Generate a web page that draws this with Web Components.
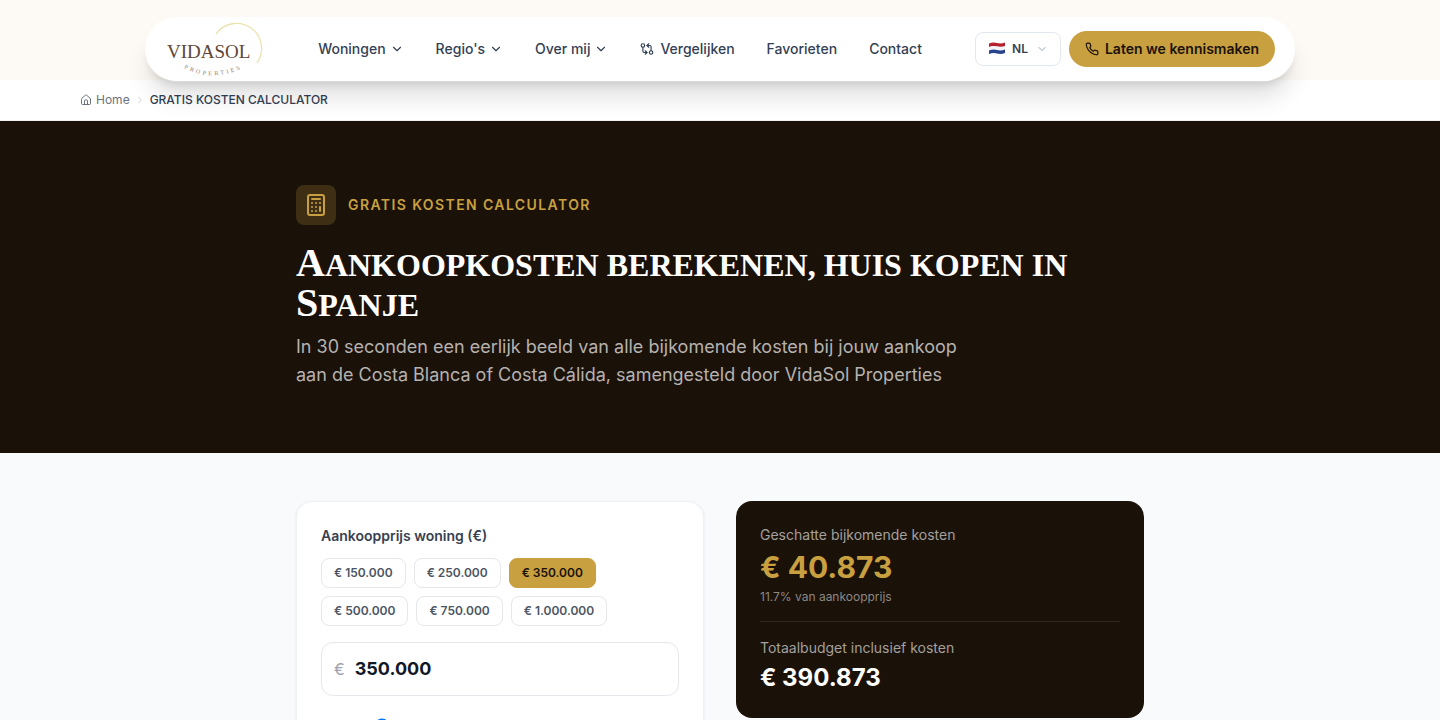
<!DOCTYPE html>
<html lang="nl">
<head>
<meta charset="utf-8">
<meta name="viewport" content="width=device-width, initial-scale=1">
<title>Gratis kosten calculator | VidaSol Properties</title>
<style>
  :root {
    --gold: #c8a03f;
    --dark: #1a1109;
    --slate-700: #334155;
    --line: #e5e7eb;
  }
  html {
    scrollbar-width: none;
  }
  body {
    margin: 0;
    background: #f8fafc;
    font-family: Inter, "Liberation Sans", sans-serif;
    -webkit-font-smoothing: antialiased;
  }
</style>
</head>
<body>
<site-header>
  <nav-item menu>Woningen</nav-item>
  <nav-item menu>Regio's</nav-item>
  <nav-item menu>Over mij</nav-item>
  <nav-item icon="compare">Vergelijken</nav-item>
  <nav-item>Favorieten</nav-item>
  <nav-item>Contact</nav-item>
</site-header>
<bread-crumb>GRATIS KOSTEN CALCULATOR</bread-crumb>
<page-hero>
  <span slot="eyebrow">GRATIS KOSTEN CALCULATOR</span>
  <span slot="intro">In 30 seconden een eerlijk beeld van alle bijkomende kosten bij jouw aankoop aan de Costa Blanca of Costa Cálida, samengesteld door VidaSol Properties</span>
</page-hero>
<cost-calculator></cost-calculator>

<script>
const ICONS = {
  chevron: '<path d="m6 9 6 6 6-6"/>',
  right: '<path d="m9 18 6-6-6-6"/>',
  compare: '<circle cx="5" cy="6" r="3"/><path d="M12 6h5a2 2 0 0 1 2 2v7"/><path d="m15 9-3-3 3-3"/><circle cx="19" cy="18" r="3"/><path d="M12 18H7a2 2 0 0 1-2-2V9"/><path d="m9 15 3 3-3 3"/>',
  phone: '<path d="M22 16.92v3a2 2 0 0 1-2.18 2 19.79 19.79 0 0 1-8.63-3.07 19.5 19.5 0 0 1-6-6 19.79 19.79 0 0 1-3.07-8.67A2 2 0 0 1 4.11 2h3a2 2 0 0 1 2 1.72 12.84 12.84 0 0 0 .7 2.81 2 2 0 0 1-.45 2.11L8.09 9.91a16 16 0 0 0 6 6l1.27-1.27a2 2 0 0 1 2.11-.45 12.84 12.84 0 0 0 2.81.7A2 2 0 0 1 22 16.92z"/>',
  house: '<path d="M15 21v-8a1 1 0 0 0-1-1h-4a1 1 0 0 0-1 1v8"/><path d="M3 10a2 2 0 0 1 .709-1.528l7-5.999a2 2 0 0 1 2.582 0l7 5.999A2 2 0 0 1 21 10v9a2 2 0 0 1-2 2H5a2 2 0 0 1-2-2z"/>',
  calculator: '<rect width="16" height="20" x="4" y="2" rx="2"/><path d="M8 6h8M16 14v4M16 10h.01M12 10h.01M8 10h.01M12 14h.01M8 14h.01M12 18h.01M8 18h.01"/>'
};

class UiIcon extends HTMLElement {
  constructor() {
    super();
    this.attachShadow({ mode: "open" });
  }

  connectedCallback() {
    const size = this.getAttribute("size") || 14;
    this.shadowRoot.innerHTML = `
    <style>
      :host { display: block; flex: none; }
      svg { display: block; fill: none; stroke: currentColor; stroke-width: 2; stroke-linecap: round; stroke-linejoin: round; }
    </style>
    <svg width="${size}" height="${size}" viewBox="0 0 24 24" aria-hidden="true">${ICONS[this.getAttribute("name")]}</svg>
    `;
  }
}
customElements.define("ui-icon", UiIcon);

class SiteLogo extends HTMLElement {
  constructor() {
    super();
    this.attachShadow({ mode: "open" });
    this.shadowRoot.innerHTML = `
    <style>
      :host { display: block; flex: none; }
      a, svg { display: block; }
      text { font-family: "Liberation Serif", serif; }
    </style>
    <a href="#" aria-label="VidaSol Properties">
      <svg width="100" height="56" viewBox="0 0 100 56">
        <path d="M51 13A25 25 0 1 1 92 42" fill="none" stroke="#ebe3b0" stroke-width="1.3"/>
        <text x="2" y="37" font-size="19" fill="#5f4637">VIDASOL</text>
        <path id="curve" d="M19 47Q48 62 80 46" fill="none"/>
        <text font-size="6" letter-spacing="2.6" fill="#8b7b70"><textPath href="#curve">PROPERTIES</textPath></text>
      </svg>
    </a>
    `;
  }
}
customElements.define("site-logo", SiteLogo);

class NavItem extends HTMLElement {
  constructor() {
    super();
    this.attachShadow({ mode: "open" });
  }

  connectedCallback() {
    const icon = this.getAttribute("icon");
    this.shadowRoot.innerHTML = `
    <style>
      :host { display: block; }
      a { display: flex; align-items: center; gap: 4px; color: var(--slate-700); font-size: 14px; font-weight: 500; line-height: 20px; text-decoration: none; white-space: nowrap; }
      a.lead { gap: 6px; }
    </style>
    <a href="#" class="${icon ? "lead" : ""}">
      ${icon ? `<ui-icon name="${icon}"></ui-icon>` : ""}<slot></slot>${this.hasAttribute("menu") ? '<ui-icon name="chevron"></ui-icon>' : ""}
    </a>
    `;
  }
}
customElements.define("nav-item", NavItem);

class SiteHeader extends HTMLElement {
  constructor() {
    super();
    this.attachShadow({ mode: "open" });
    this.shadowRoot.innerHTML = `
    <style>
      /* the bar hangs 2px below the strip, over the breadcrumb */
      :host { display: block; position: relative; z-index: 1; box-sizing: border-box; height: 80px; padding: 16px 24px 0; background: #fdf9f4; }
      header { display: flex; align-items: center; justify-content: space-between; box-sizing: border-box; max-width: 1152px; margin: 0 auto; padding: 4px 20px; border: 1px solid rgba(255, 255, 255, .2); border-radius: 33px; background: #fff; background-clip: padding-box; box-shadow: 0 20px 25px -5px rgba(0, 0, 0, .12), 0 8px 10px -6px rgba(0, 0, 0, .12); }
      nav { display: flex; gap: 32px; }
      .actions { display: flex; align-items: center; gap: 8px; }
      button { display: flex; align-items: center; font-family: inherit; line-height: 20px; cursor: pointer; }
      .lang { height: 34px; padding: 0 12px; gap: 6px; border: 1px solid #e2e8f0; border-radius: 8px; background: #fff; color: var(--slate-700); font-size: 12px; font-weight: 600; }
      .lang ui-icon { color: #94a3b8; margin-left: 2px; }
      .cta { height: 36px; padding: 0 16px; gap: 6px; border: 0; border-radius: 18px; background: var(--gold); color: var(--dark); font-size: 14px; font-weight: 600; }
    </style>
    <header>
      <site-logo></site-logo>
      <nav><slot></slot></nav>
      <div class="actions">
        <button class="lang" type="button">
          <svg width="18" height="14" viewBox="0 0 18 14" aria-hidden="true">
            <path d="M1 1.500Q5 0 9 1T17 .500V4.500Q13 5 9 4.500T1 5z" fill="#b5202c"/>
            <path d="M1 5Q5 3.500 9 4.500T17 4V8Q13 9 9 8T1 8.500z" fill="#f1f3f7"/>
            <path d="M1 8.500Q5 7 9 8T17 7.500V11Q13 12.500 9 11.500T1 12z" fill="#26438c"/>
          </svg>
          NL
          <ui-icon name="chevron" size="12"></ui-icon>
        </button>
        <button class="cta" type="button"><ui-icon name="phone"></ui-icon>Laten we kennismaken</button>
      </div>
    </header>
    `;
  }
}
customElements.define("site-header", SiteHeader);

class BreadCrumb extends HTMLElement {
  constructor() {
    super();
    this.attachShadow({ mode: "open" });
    this.shadowRoot.innerHTML = `
    <style>
      :host { display: block; background: #fff; border-bottom: 1px solid #f1f1f1; }
      nav { display: flex; align-items: center; gap: 4px; max-width: 1280px; margin: 0 auto; padding: 12px 0; font-size: 12px; line-height: 16px; color: var(--slate-700); font-weight: 500; }
      a { display: flex; align-items: center; gap: 4px; color: #6b7280; font-weight: 400; text-decoration: none; }
      nav > ui-icon { color: #d1d5db; }
    </style>
    <nav aria-label="Kruimelpad">
      <a href="#"><ui-icon name="house" size="12"></ui-icon>Home</a>
      <ui-icon name="right" size="12"></ui-icon>
      <slot></slot>
    </nav>
    `;
  }
}
customElements.define("bread-crumb", BreadCrumb);

class PageHero extends HTMLElement {
  constructor() {
    super();
    this.attachShadow({ mode: "open" });
    this.shadowRoot.innerHTML = `
    <style>
      :host { display: block; padding: 64px 24px; background: var(--dark); }
      section { max-width: 848px; margin: 0 auto; }
      .eyebrow { display: flex; align-items: center; gap: 12px; color: var(--gold); font-size: 14px; line-height: 20px; font-weight: 600; letter-spacing: .1em; }
      .tile { display: grid; place-items: center; width: 40px; height: 40px; border-radius: 8px; background: #3d2e14; }
      h1 { margin: 20px 0 8px; color: #fff; font-family: "Liberation Serif", serif; font-size: 32px; line-height: 40px; font-weight: 700; text-transform: uppercase; }
      /* initials stand a little above the other capitals */
      h1 span { font-size: 40px; line-height: 0; }
      p { max-width: 672px; margin: 0; color: #b5b2af; font-size: 18px; line-height: 28px; }
    </style>
    <section>
      <div class="eyebrow"><span class="tile"><ui-icon name="calculator" size="24"></ui-icon></span><slot name="eyebrow"></slot></div>
      <h1><span>A</span>ankoopkosten berekenen, huis kopen in <span>S</span>panje</h1>
      <p><slot name="intro"></slot></p>
    </section>
    `;
  }
}
customElements.define("page-hero", PageHero);

class PriceCard extends HTMLElement {
  constructor() {
    super();
    this.attachShadow({ mode: "open" });
    this.shadowRoot.innerHTML = `
    <style>
      :host { display: block; padding: 24px; border: 1px solid #eef2f6; border-radius: 16px; background: #fff; box-shadow: 0 1px 3px rgba(15, 23, 42, .08); }
      label { display: block; color: #374151; font-size: 14px; line-height: 20px; font-weight: 600; }
      .presets { display: flex; flex-wrap: wrap; gap: 8px; margin: 12px 0 16px; }
      .presets button { height: 30px; padding: 0 12px; border: 1px solid var(--line); border-radius: 8px; background: #fff; color: #4b5563; font: 600 12px/16px Inter, sans-serif; cursor: pointer; }
      .presets button[aria-pressed="true"] { border-color: var(--gold); background: var(--gold); color: var(--dark); }
      .field { display: flex; align-items: center; gap: 10px; height: 52px; padding: 0 12px; border: 1px solid var(--line); border-radius: 12px; color: #9ca3af; font-size: 16px; line-height: 24px; font-weight: 400; }
      .field input { flex: 1; min-width: 0; padding: 0; border: 0; outline: 0; background: none; color: #111827; font: 700 18px/28px Inter, sans-serif; }
      input[type="range"] { display: block; width: 100%; margin: 22px 0 0; }
    </style>
    <label for="price">Aankoopprijs woning (€)</label>
    <div class="presets"></div>
    <div class="field"><span>€</span><input id="price" type="text" inputmode="numeric"></div>
    <input type="range" min="50000" max="2000000" step="5000" aria-label="Aankoopprijs">
    `;
    this._field = this.shadowRoot.querySelector("#price");
    this._range = this.shadowRoot.querySelector("[type=range]");
    this._presets = this.shadowRoot.querySelector(".presets");
    for (const amount of ["150.000", "250.000", "350.000", "500.000", "750.000", "1.000.000"]) {
      const button = document.createElement("button");
      button.type = "button";
      button.textContent = "€ " + amount;
      button.addEventListener("click", () => this._setPrice(amount));
      this._presets.appendChild(button);
    }
  }

  connectedCallback() {
    this._setPrice("350.000");
    this._range.addEventListener("input", () => {
      this._setPrice(this._range.value.replace(/\B(?=(\d{3})+$)/g, "."));
    });
  }

  _setPrice(amount) {
    this._field.value = amount;
    this._range.value = amount.replaceAll(".", "");
    for (const button of this._presets.children) {
      button.setAttribute("aria-pressed", button.textContent === "€ " + amount);
    }
  }
}
customElements.define("price-card", PriceCard);

class CostSummary extends HTMLElement {
  constructor() {
    super();
    this.attachShadow({ mode: "open" });
    this.shadowRoot.innerHTML = `
    <style>
      :host { display: block; padding: 24px; border-radius: 16px; background: var(--dark); color: #a3a09d; font-size: 14px; line-height: 20px; }
      p { margin: 0; }
      .costs { margin: 4px 0; color: var(--gold); font-size: 30px; line-height: 36px; font-weight: 700; }
      .share { color: #8c8884; font-size: 12px; line-height: 16px; }
      .total { margin-top: 16px; padding-top: 16px; border-top: 1px solid #312921; }
      .budget { margin-top: 4px; color: #fff; font-size: 24px; line-height: 32px; font-weight: 700; }
    </style>
    <p>Geschatte bijkomende kosten</p>
    <p class="costs">€ 40.873</p>
    <p class="share">11.7% van aankoopprijs</p>
    <div class="total">
      <p>Totaalbudget inclusief kosten</p>
      <p class="budget">€ 390.873</p>
    </div>
    `;
  }
}
customElements.define("cost-summary", CostSummary);

class CostCalculator extends HTMLElement {
  constructor() {
    super();
    this.attachShadow({ mode: "open" });
    this.shadowRoot.innerHTML = `
    <style>
      :host { display: block; padding: 48px 24px; }
      main { display: grid; grid-template-columns: 1fr 1fr; align-items: start; gap: 32px; max-width: 848px; margin: 0 auto; }
    </style>
    <main>
      <price-card></price-card>
      <cost-summary></cost-summary>
    </main>
    `;
  }
}
customElements.define("cost-calculator", CostCalculator);
</script>
</body>
</html>
